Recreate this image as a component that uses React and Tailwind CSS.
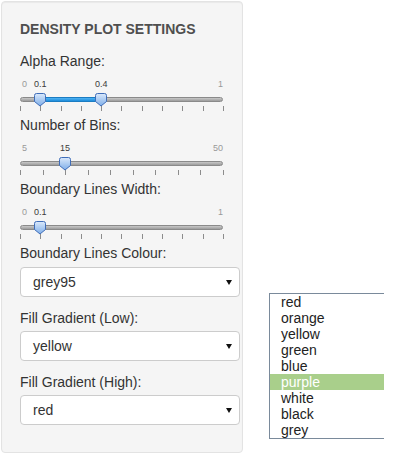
import React from "react";

function Handle({ left }) {
  return (
    <svg
      className="absolute top-[22px]"
      style={{ left: left - 6 }}
      width="12"
      height="14"
      viewBox="0 0 12 14"
    >
      <defs>
        <linearGradient id="hg" x1="0" y1="0" x2="0" y2="1">
          <stop offset="0" stopColor="#dbe9fb" />
          <stop offset="1" stopColor="#7eaee9" />
        </linearGradient>
      </defs>
      <path
        d="M2.5 0.5 H9.5 Q11.5 0.5 11.5 2.5 V8.5 L6 13 L0.5 8.5 V2.5 Q0.5 0.5 2.5 0.5 Z"
        fill="url(#hg)"
        stroke="#3f6db8"
        strokeWidth="1"
      />
    </svg>
  );
}

// ion.rangeSlider style widget, 203px of travel
function Slider({ min, max, from, to, ticks }) {
  const pos = (v) => ((v - min) / (max - min)) * 203;
  const isRange = to !== undefined;

  return (
    <div className="relative flex w-[204px] flex-col pb-[4px]">
      <div className="relative flex h-[26px] items-start justify-between pl-[2px] pr-[1px] pt-[8px] text-[9px] leading-[10px] text-[#999]">
        <span>{min}</span>
        <span>{max}</span>
        <span
          className="absolute top-[8px] -translate-x-1/2 text-[#3a3a3a]"
          style={{ left: pos(from) }}
        >
          {from}
        </span>
        {isRange && (
          <span
            className="absolute top-[8px] -translate-x-1/2 text-[#3a3a3a]"
            style={{ left: pos(to) }}
          >
            {to}
          </span>
        )}
      </div>

      <div className="relative mr-px h-[5px] rounded-full border border-[#8a8a8a] bg-linear-to-b from-[#c8c8c8] to-[#9c9c9c]">
        {isRange && (
          <div
            className="absolute -top-px h-[5px] border-y border-[#1b7cc2] bg-linear-to-b from-[#4fb3f2] to-[#1a8cdb]"
            style={{ left: pos(from), width: pos(to) - pos(from) }}
          />
        )}
      </div>

      <div className="mt-[4px] flex h-[5px] justify-between">
        {Array.from({ length: ticks }, (_, i) => (
          <div key={i} className="w-px bg-[#8c8c8c]" />
        ))}
      </div>

      <Handle left={pos(from)} />
      {isRange && <Handle left={pos(to)} />}
    </div>
  );
}

function Select({ value }) {
  return (
    <div className="flex h-[30px] w-[220px] items-center justify-between rounded border border-[#cccccc] bg-white pl-3 pr-[7px] text-[14px] text-[#333]">
      <span>{value}</span>
      <svg width="6" height="5" viewBox="0 0 6 5">
        <path d="M0 0 H6 L3 5 Z" fill="#111" />
      </svg>
    </div>
  );
}

function Label({ children, className = "" }) {
  return <div className={"h-5 text-[14px] leading-5 text-[#333] " + className}>{children}</div>;
}

const colours = ["red", "orange", "yellow", "green", "blue", "purple", "white", "black", "grey"];

export default function App() {
  return (
    <div className="relative h-[454px] w-[400px] overflow-hidden bg-white font-[Liberation_Sans,Arial,sans-serif]">
      <div className="ml-px mt-px flex w-[242px] flex-col rounded border border-[#e3e3e3] bg-[#f5f5f5] pb-[27px] pl-[18px] pr-[2px] pt-[17px] shadow-[inset_0_1px_1px_rgba(0,0,0,0.05)]">
        <div className="mb-3 h-5 text-[14px] font-bold leading-5 text-[#4f4f4f]">DENSITY PLOT SETTINGS</div>

        <Label>Alpha Range:</Label>
        <Slider min={0} max={1} from={0.1} to={0.4} ticks={11} />

        <Label>Number of Bins:</Label>
        <Slider min={5} max={50} from={15} ticks={10} />

        <Label>Boundary Lines Width:</Label>
        <Slider min={0} max={1} from={0.1} ticks={11} />

        <Label className="mb-1">Boundary Lines Colour:</Label>
        <Select value="grey95" />

        <Label className="mb-[3px] mt-[11px]">Fill Gradient (Low):</Label>
        <Select value="yellow" />

        <Label className="mb-[3px] mt-[11px]">Fill Gradient (High):</Label>
        <Select value="red" />
      </div>

      {/* open select popup */}
      <div className="absolute left-[269px] top-[293px] flex w-[115px] flex-col border-y border-l border-[#7a8a9b] bg-white">
        {colours.map((c) => (
          <div
            key={c}
            className={
              "h-4 pl-[11px] text-[14px] leading-4 " +
              (c === "purple" ? "bg-[#a9cf8b] text-white" : "text-[#222]")
            }
          >
            {c}
          </div>
        ))}
      </div>
    </div>
  );
}
